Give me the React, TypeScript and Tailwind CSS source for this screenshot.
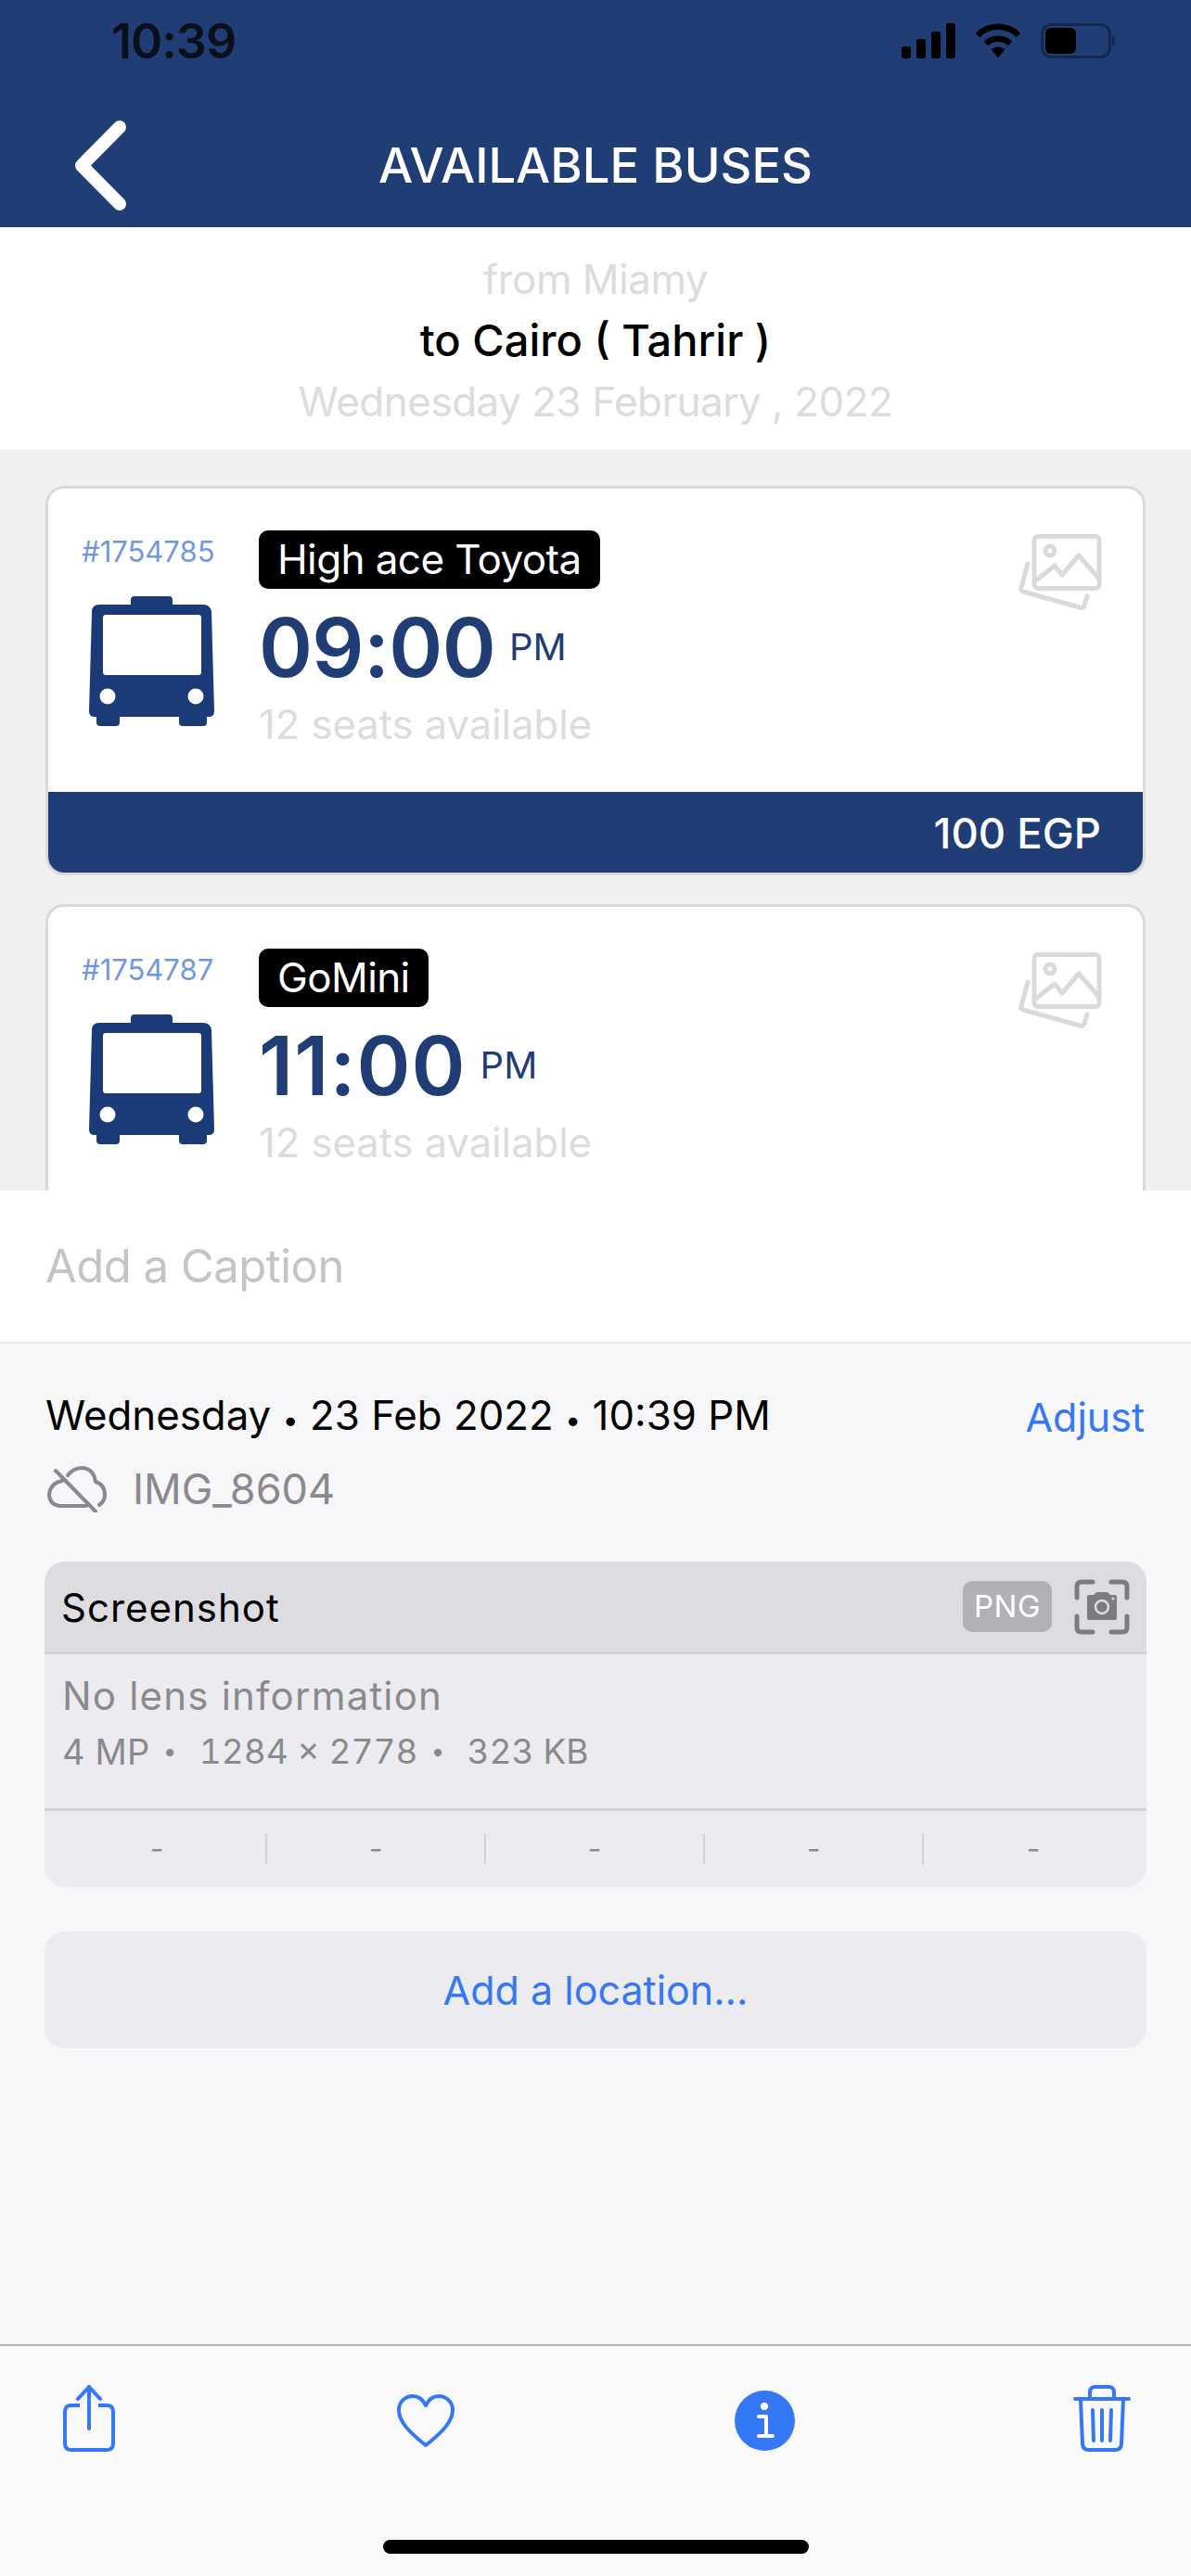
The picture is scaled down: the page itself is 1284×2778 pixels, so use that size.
import React from "react";

const BusIcon = () => (
  <svg width="135" height="140" viewBox="0 0 135 140" className="block">
    <path fill="#1b3b78" d="M45 4q0-4 4-4h37q4 0 4 4v5h33q8 0 9 8l3 107q0 6-6 6h-2v6q0 4-4 4h-22q-4 0-4-4v-6H33v6q0 4-4 4H12q-4 0-4-4v-6H6q-6 0-6-6L3 17q0-8 8-8h34z" />
    <rect x="15" y="20" width="106" height="65" rx="3" fill="#ffffff" />
    <ellipse cx="20" cy="108" rx="8.5" ry="8.5" fill="#ffffff" />
    <ellipse cx="115" cy="108" rx="8.5" ry="8.5" fill="#ffffff" />
  </svg>
);

const PhotosIcon = () => (
  <svg width="90" height="82" viewBox="0 0 90 82" fill="none" stroke="#dadada" strokeWidth="5" strokeLinecap="round" strokeLinejoin="round" className="block">
    <rect x="17" y="2.5" width="70" height="56" rx="4" />
    <circle cx="34" cy="18" r="5" />
    <path d="M20 49 L39 34 L47 44 L65 23 L86 47" />
    <path d="M10 32 L3 58 Q2 61 5 62 L66 79 Q70 80 71 77 L74 67" />
  </svg>
);

function BusCard({ id, tag, time, price, last }: { id: string; tag: string; time: string; price?: string; last?: boolean }) {
  return (
    <div className={`w-[1186px] shrink-0 overflow-hidden rounded-[20px] border-[3px] border-[#d9d9d9] bg-white ${last ? "mt-[31px]" : ""}`}>
      <div className="flex h-[327px]">
        <div className="ml-[36px] flex w-[144px] flex-col">
          <div className="mt-[50px] h-[36px] text-[31px] leading-[36px] text-[#6f98de]">{id}</div>
          <div className="ml-[8px] mt-[30px]">
            <BusIcon />
          </div>
        </div>
        <div className="ml-[47px] flex flex-col items-start">
          <div className="mt-[45px] flex h-[63px] items-center rounded-[10px] bg-black px-[20px] text-[44px] leading-[63px] tracking-[-0.6px] text-white">{tag}</div>
          <div className="mt-[15px] flex h-[96px] items-center">
            <span className={`text-[88px] font-semibold leading-[96px] text-[#213d75] ${last ? "tracking-[1px]" : "tracking-[-0.7px]"}`}>{time}</span>
            <span className="ml-[15px] text-[40px] leading-[96px] text-[#213d75]">PM</span>
          </div>
          <div className="mt-[9px] h-[52px] text-[43.5px] leading-[52px] text-[#dcdcdc]">12 seats available</div>
        </div>
        <div className="ml-auto mr-[44px] mt-[49px]">
          <PhotosIcon />
        </div>
      </div>
      {price && (
        <div className="flex h-[87px] items-center justify-end bg-[#213d75] pr-[45px] pt-[3px] text-[45.5px] font-medium text-white">{price}</div>
      )}
    </div>
  );
}

const Dot = () => <span className="mx-[12.5px] text-[30px] leading-[56px]">•</span>;
const SmallDot = () => <span className="w-[53px] pr-[10px] text-center text-[26px]">•</span>;

export default function App() {
  return (
    <div className="flex h-[2778px] w-[1284px] flex-col overflow-hidden bg-[#f7f7fa] font-['Inter','Liberation_Sans',sans-serif]">
      {/* App header */}
      <header className="h-[245px] shrink-0 bg-[#213d75]">
        <div className="flex h-[90px] items-start">
          <div className="ml-[120px] mt-[16px] text-[52px] font-semibold leading-[58px] tracking-[-1px] text-[#0a0f1c]">10:39</div>
          <div className="ml-auto mr-[82px] mt-[25px] flex items-start">
            <svg width="58" height="38" viewBox="0 0 58 38" fill="#000" className="block">
              <rect x="0" y="25" width="10" height="13" rx="2.5" />
              <rect x="16" y="17" width="10" height="21" rx="2.5" />
              <rect x="32" y="9" width="10" height="29" rx="2.5" />
              <rect x="48" y="0" width="10" height="38" rx="2.5" />
            </svg>
            <svg width="50" height="38" viewBox="0 0 50 38" fill="none" stroke="#000" className="ml-[21px] block">
              <path d="M3 13 A31 31 0 0 1 47 13" strokeWidth="6.5" />
              <path d="M12 22 A19 19 0 0 1 38 22" strokeWidth="6.5" />
              <path d="M17.5 28 L25 37.5 L32.5 28 Q25 23 17.5 28 Z" fill="#000" stroke="none" />
            </svg>
            <svg width="80" height="38" viewBox="0 0 80 38" className="ml-[21px] block">
              <rect x="1.5" y="1.5" width="73" height="35" rx="10" fill="none" stroke="#13284f" strokeWidth="3" />
              <rect x="5" y="5" width="33" height="28" rx="6" fill="#000" />
              <path d="M77 13 Q80 15 80 19 Q80 23 77 25 Z" fill="#13284f" />
            </svg>
          </div>
        </div>
        <div className="grid h-[155px] grid-cols-[1fr_auto_1fr] items-start">
          <div className="ml-[80px] mt-[40px]">
            <svg width="56" height="97" viewBox="0 0 56 97" fill="none" stroke="#ffffff" strokeWidth="14" strokeLinecap="round" strokeLinejoin="round" className="block">
              <path d="M49 7 L8 48.5 L49 90" />
            </svg>
          </div>
          <div className="mt-[60px] text-[52.5px] font-medium leading-[56px] text-white">AVAILABLE BUSES</div>
          <div />
        </div>
      </header>

      {/* Route summary */}
      <section className="flex h-[240px] shrink-0 flex-col items-center bg-white pt-[28px] text-[44px] tracking-[-0.5px]">
        <div className="h-[66px] leading-[56px] text-[#dcdcdc]">from Miamy</div>
        <div className="h-[66px] text-[47px] font-medium leading-[56px] tracking-normal text-black">to Cairo ( Tahrir )</div>
        <div className="leading-[56px] text-[#dcdcdc]">Wednesday 23 February , 2022</div>
      </section>

      {/* Bus list */}
      <section className="flex h-[799px] shrink-0 flex-col items-center overflow-hidden bg-[#f0f0f0] pt-[39px]">
        <BusCard id="#1754785" tag="High ace Toyota" time="09:00" price="100 EGP" />
        <BusCard id="#1754787" tag="GoMini" time="11:00" last />
      </section>

      {/* Caption */}
      <div className="flex h-[163px] shrink-0 items-center bg-white pl-[49px] text-[49px] tracking-[-0.5px] text-[#c4c4c6]">Add a Caption</div>
      <div className="h-[2px] shrink-0 bg-[#e9e9eb]" />

      {/* Metadata */}
      <div className="flex grow flex-col">
        <div className="ml-[49px] mr-[50px] mt-[51px] flex h-[56px] items-center justify-between text-[43.8px] leading-[56px]">
          <span className="pt-[2px] text-black">
            Wednesday<Dot />23 Feb 2022<Dot />10:39 PM
          </span>
          <span className="text-[43px] text-[#3478f6]">Adjust</span>
        </div>
        <div className="ml-[51px] mt-[22px] flex h-[56px] items-center text-[45px] leading-[56px] text-[#8a8a8e]">
          <svg width="64" height="50" viewBox="0 0 64 50" fill="none" stroke="#8a8a8e" strokeWidth="4" strokeLinecap="round" strokeLinejoin="round" className="block">
            <path d="M16 16 Q4 18 2 30 Q2 42 14 43 L42 43" />
            <path d="M22 10 Q28 2 38 2 Q50 3 52 17 Q62 20 62 31 Q62 38 56 42" />
            <path d="M9 5 L52 49" />
          </svg>
          <span className="ml-[28px]">IMG_8604</span>
        </div>

        <div className="mx-[48px] mt-[50px] overflow-hidden rounded-[22px] bg-[#ececf0]">
          <div className="flex h-[100px] items-center border-b-[3px] border-[#d1d1d6] bg-[#dddde1] pl-[18px] pr-[18px]">
            <span className="pt-[2px] text-[42px] tracking-[1px] text-black">Screenshot</span>
            <span className="ml-auto flex h-[55px] w-[96px] items-center justify-center rounded-[10px] bg-[#b0b0b5] text-[33px] tracking-[0.5px] text-white">PNG</span>
            <svg width="60" height="60" viewBox="0 0 60 60" fill="none" className="ml-[24px] block">
              <path d="M3 20 V8 Q3 3 8 3 H20 M40 3 H52 Q57 3 57 8 V20 M57 40 V52 Q57 57 52 57 H40 M20 57 H8 Q3 57 3 52 V40" stroke="#7c7c80" strokeWidth="5" strokeLinecap="round" />
              <path d="M14 19 Q14 17 16 17 H21 L24 14 H36 L39 17 H44 Q46 17 46 19 V42 Q46 44 44 44 H16 Q14 44 14 42 Z" fill="#7c7c80" />
              <circle cx="30" cy="30" r="7" fill="none" stroke="#dddde1" strokeWidth="2.5" />
              <circle cx="42" cy="21" r="1.5" fill="#dddde1" />
            </svg>
          </div>
          <div className="flex h-[166px] flex-col pl-[19px] pt-[17px] text-[#8a8a8e]">
            <div className="h-[56px] text-[42px] leading-[56px] tracking-[1.2px]">No lens information</div>
            <div className="mt-[9px] flex h-[46px] items-center text-[37px] tabular-nums leading-[46px]">
              <span className="text-[38px] tracking-[0.3px]">4 MP</span>
              <SmallDot />
              <span>1284 × 2778</span>
              <SmallDot />
              <span>323 KB</span>
            </div>
          </div>
          <div className="grid h-[85px] grid-cols-5 border-t-[3px] border-[#d1d1d6] px-[4px] text-[32px] text-[#8a8a8e]">
            {[0, 1, 2, 3, 4].map((i) => (
              <div key={i} className="flex items-center justify-center">
                <span className={`flex h-[34px] w-full items-center justify-center leading-[34px] ${i < 4 ? "border-r-2 border-[#d1d1d6]" : ""}`}>-</span>
              </div>
            ))}
          </div>
        </div>

        <div className="mx-[48px] mt-[48px] flex h-[126px] items-center justify-center rounded-[22px] bg-[#ececf0] text-[43px] text-[#3478f6]">Add a location...</div>
      </div>

      {/* Toolbar */}
      <footer className="flex h-[250px] shrink-0 flex-col border-t-2 border-[#b3b3b5] bg-[#f9f9f9]">
        <div className="flex h-[116px] items-start justify-between px-[60px] pt-[42px]">
          <div className="flex w-[72px] justify-center">
            <svg width="56" height="72" viewBox="0 0 56 72" fill="none" stroke="#3478f6" strokeWidth="4" strokeLinecap="round" strokeLinejoin="round" className="block">
              <path d="M18 22 H9 Q2 22 2 29 V63 Q2 70 9 70 H47 Q54 70 54 63 V29 Q54 22 47 22 H38" strokeLinecap="butt" />
              <path d="M28 2 V47" />
              <path d="M16 15 L28 2 L40 15" />
            </svg>
          </div>
          <div className="mt-[10px] flex w-[72px] justify-center">
            <svg width="62" height="58" viewBox="0 0 62 58" fill="none" stroke="#3478f6" strokeWidth="4" strokeLinejoin="round" className="block">
              <path d="M31 55 C12 40 2 29 2 17 C2 8 9 2 17 2 C23 2 28 6 31 12 C34 6 39 2 45 2 C53 2 60 8 60 17 C60 29 50 40 31 55 Z" />
            </svg>
          </div>
          <div className="ml-[2px] mt-[6px] flex w-[72px] justify-center">
            <svg width="65" height="65" viewBox="0 0 65 65" className="block">
              <circle cx="32.5" cy="32.5" r="32.5" fill="#3478f6" />
              <circle cx="32" cy="17" r="4" fill="#ffffff" />
              <path d="M26 28 H34 V48 M26 49 H41" fill="none" stroke="#ffffff" strokeWidth="4" strokeLinecap="round" strokeLinejoin="round" />
            </svg>
          </div>
          <div className="flex w-[72px] justify-center">
            <svg width="62" height="72" viewBox="0 0 62 72" fill="none" stroke="#3478f6" strokeWidth="4" strokeLinecap="round" strokeLinejoin="round" className="block">
              <path d="M2 15 H60" />
              <path d="M18 14 V8 Q18 2 24 2 H38 Q44 2 44 8 V14" />
              <path d="M8 16 L10 63 Q10 70 17 70 H45 Q52 70 52 63 L54 16" />
              <path d="M21 27 L22 60 M31 27 V60 M41 27 L40 60" />
            </svg>
          </div>
        </div>
        <div className="mx-auto mt-[93px] h-[15px] w-[459px] rounded-full bg-black" />
      </footer>
    </div>
  );
}
